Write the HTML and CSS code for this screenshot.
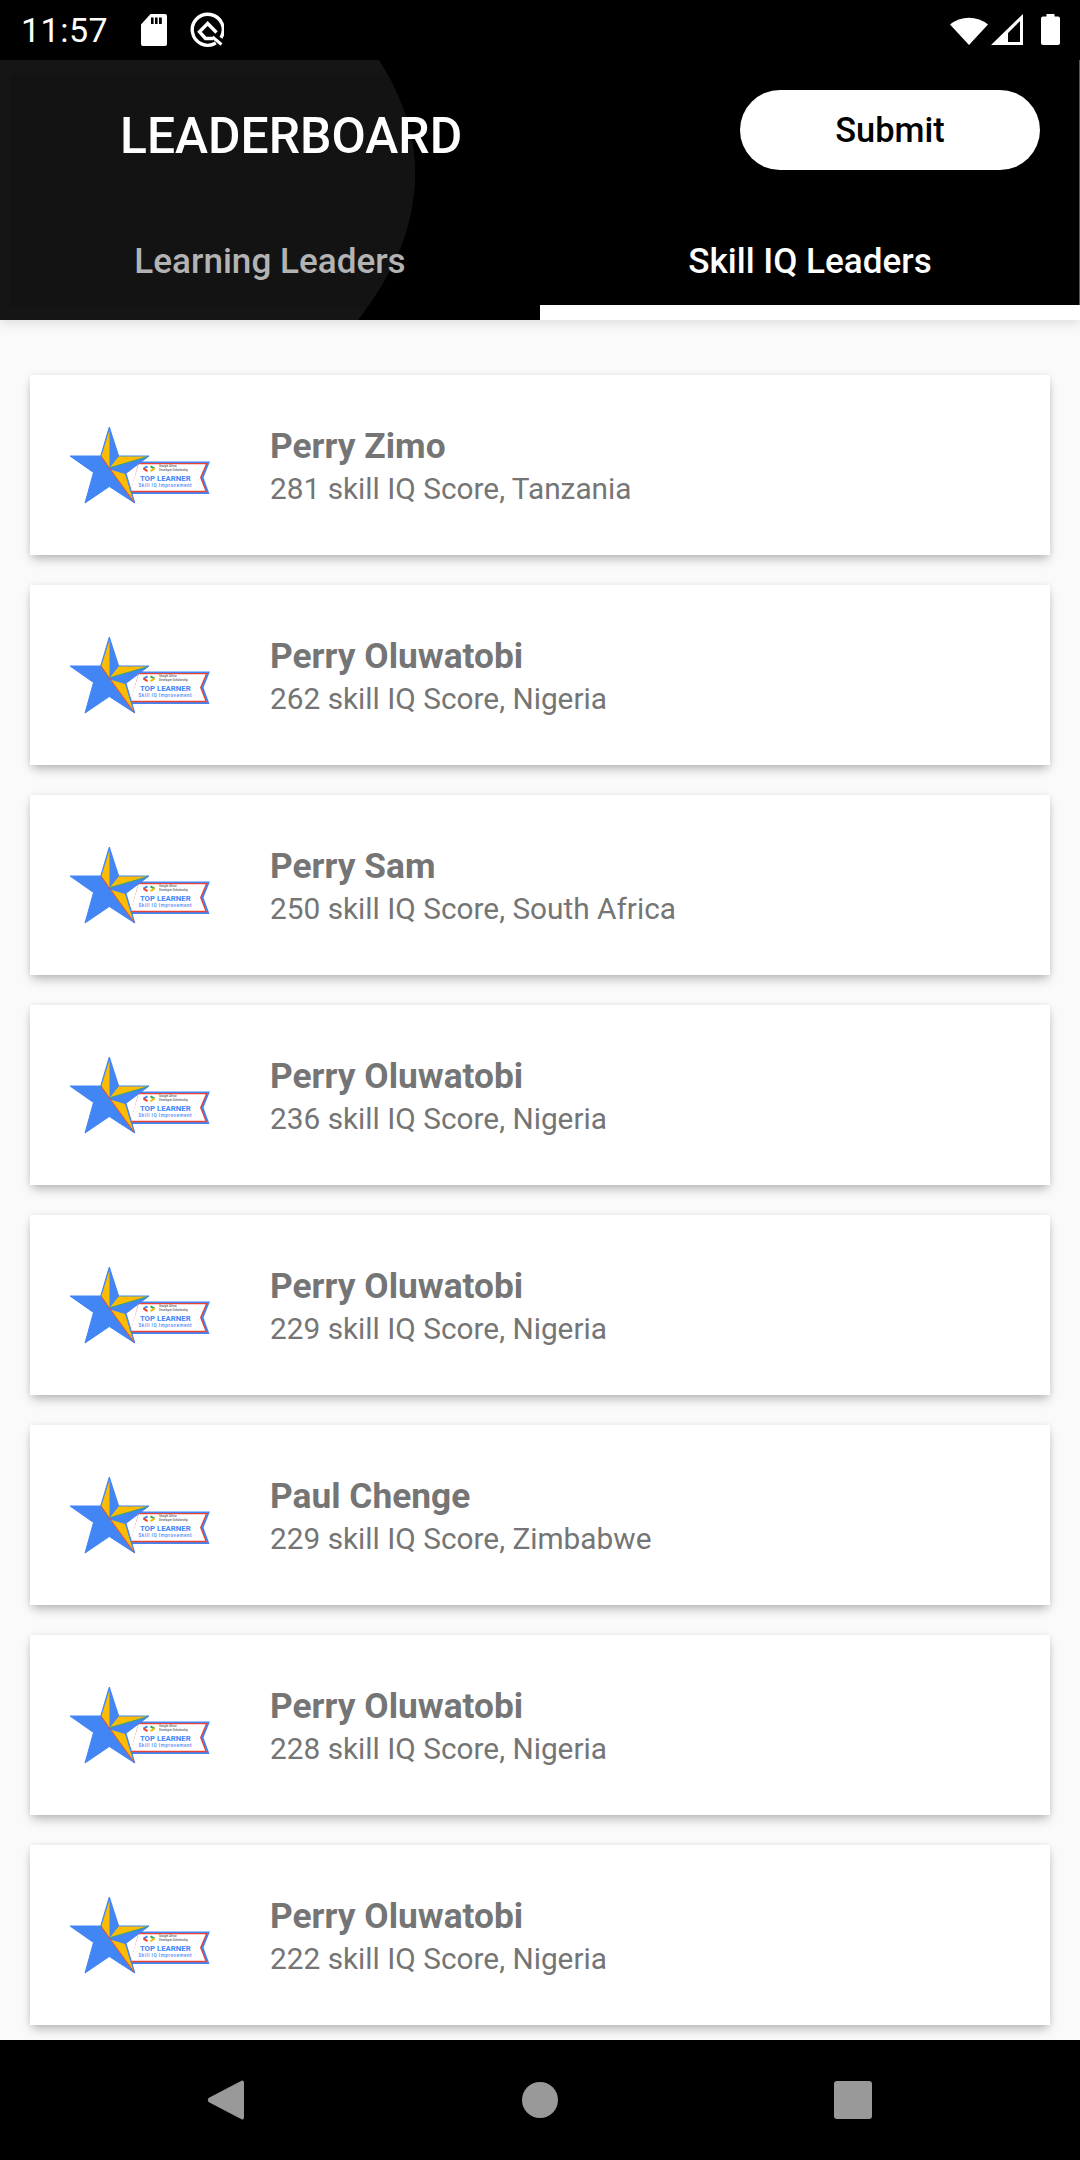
FILE: index.html
```html
<!DOCTYPE html>
<html lang="en">
<head>
<meta charset="utf-8">
<title>Leaderboard</title>
<link rel="stylesheet" href="styles.css">
</head>
<body>
<svg class="defs" width="0" height="0" aria-hidden="true">
  <symbol id="badge-art" viewBox="0 0 160 90">
    <path d="M79.500 41.500H150L143.500 57.500L149.500 74H71.500Z" fill="#4285f4"/>
    <path d="M78.500 43H147.500L141.500 57.500L147 72.300H70.500Z" fill="#ea4335"/>
    <path d="M78.500 44.200H145.700L140 57.500L145.200 70.800H70.500Z" fill="#fff"/>
    <path d="M49.300 7L58.700 36H89L66 53.300L74.800 83L49.300 66.500L25 83L33.500 52.500L10 36H40.700Z" fill="#4285f4" stroke="#4285f4" stroke-width="1" stroke-linejoin="round"/>
    <path d="M49.500 10L41.500 36L49.500 48Z" fill="#fbbc04"/>
    <path d="M49.500 48L58.700 36.500H87L49.500 47.800Z" fill="#fbbc04"/>
    <path d="M49.800 47.600L87 37" stroke="#34a853" stroke-width=".8" fill="none"/>
    <path d="M50 49.500L65 54L73.500 81.500Z" fill="#fbbc04"/>
    <path d="M41 36.500L74.300 82.500" stroke="#ea4335" stroke-width="1" fill="none"/>
    <path d="M87.500 46.300L83.500 48.700" stroke="#4285f4" stroke-width="2" fill="none"/>
    <path d="M83.500 48.700L87.500 51.100" stroke="#ea4335" stroke-width="2" fill="none"/>
    <path d="M90.500 46.300L94.500 48.700" stroke="#34a853" stroke-width="2" fill="none"/>
    <path d="M94.500 48.700L90.500 51.100" stroke="#fbbc04" stroke-width="2" fill="none"/>
  </symbol>
</svg>
<div class="screen">
  <div class="status">
    <span class="time">11:57</span>
    <svg class="ic-sd" viewBox="0 0 26 32" width="26" height="32"><path fill-rule="evenodd" d="M9.500 0H24a2 2 0 0 1 2 2V30a2 2 0 0 1-2 2H2a2 2 0 0 1-2-2V10.500ZM10 3.500v6.500h2.600V3.500ZM14 3.500v6.500h2.600V3.500ZM18 3.500v6.500h2.800V3.500Z" fill="#fff"/></svg>
    <svg class="ic-q" viewBox="0 0 36 36" width="36" height="36"><path d="M27.800 31A15.500 15.500 0 1 1 33 25.800" fill="none" stroke="#fff" stroke-width="3.400"/><path d="M28.500 20.500L19.700 11.500L11.500 19.800L17.500 26.500H25" fill="none" stroke="#fff" stroke-width="3.400"/><path d="M24.500 25L33.500 32.500" stroke="#fff" stroke-width="3"/></svg>
    <span class="status-right">
      <svg viewBox="0 0 38 31" width="38" height="31"><path d="M0 10.500A30 30 0 0 1 38 10.500L19 31Z" fill="#fff"/></svg>
      <svg viewBox="0 0 32 31" width="32" height="31"><path fill-rule="evenodd" d="M32 0V31H0ZM29 7L17 19V28H29Z" fill="#fff"/></svg>
      <svg class="ic-bat" viewBox="0 0 19 31" width="19" height="31"><path d="M5.500 0H13.500V2.500H17a2 2 0 0 1 2 2V29a2 2 0 0 1-2 2H2a2 2 0 0 1-2-2V4.500a2 2 0 0 1 2-2H5.500Z" fill="#fff"/></svg>
    </span>
  </div>
  <header class="header">
    <svg class="arc" viewBox="0 0 420 260" width="420" height="260" aria-hidden="true">
      <clipPath id="arc-clip"><path d="M0 0H379C403 38 415 76 415 112C415 170 392 215 358 260H0Z"/></clipPath>
      <g clip-path="url(#arc-clip)"><rect width="420" height="260" fill="#151515"/><rect x="10" y="14" width="410" height="234" fill="#131313"/></g>
    </svg>
    <div class="top-row">
      <h1 class="title">LEADERBOARD</h1>
      <button class="submit">Submit</button>
    </div>
    <nav class="tabs">
      <div class="tab">Learning Leaders</div>
      <div class="tab active">Skill IQ Leaders</div>
    </nav>
  </header>
  <main class="list">
    <div class="card"><svg class="badge" viewBox="0 0 160 90"><use href="#badge-art" width="160" height="90"/><text class="b-small" x="99" y="47">Google Africa</text><text class="b-small" x="99" y="51">Developer Scholarship</text><text class="b-top" x="105.300" y="61" text-anchor="middle">TOP LEARNER</text><text class="b-skill" x="105.300" y="67" text-anchor="middle">Skill IQ Improvement</text></svg><div class="info"><div class="name">Perry Zimo</div><div class="score">281 skill IQ Score, Tanzania</div></div></div>
    <div class="card"><svg class="badge" viewBox="0 0 160 90"><use href="#badge-art" width="160" height="90"/><text class="b-small" x="99" y="47">Google Africa</text><text class="b-small" x="99" y="51">Developer Scholarship</text><text class="b-top" x="105.300" y="61" text-anchor="middle">TOP LEARNER</text><text class="b-skill" x="105.300" y="67" text-anchor="middle">Skill IQ Improvement</text></svg><div class="info"><div class="name">Perry Oluwatobi</div><div class="score">262 skill IQ Score, Nigeria</div></div></div>
    <div class="card"><svg class="badge" viewBox="0 0 160 90"><use href="#badge-art" width="160" height="90"/><text class="b-small" x="99" y="47">Google Africa</text><text class="b-small" x="99" y="51">Developer Scholarship</text><text class="b-top" x="105.300" y="61" text-anchor="middle">TOP LEARNER</text><text class="b-skill" x="105.300" y="67" text-anchor="middle">Skill IQ Improvement</text></svg><div class="info"><div class="name">Perry Sam</div><div class="score">250 skill IQ Score, South Africa</div></div></div>
    <div class="card"><svg class="badge" viewBox="0 0 160 90"><use href="#badge-art" width="160" height="90"/><text class="b-small" x="99" y="47">Google Africa</text><text class="b-small" x="99" y="51">Developer Scholarship</text><text class="b-top" x="105.300" y="61" text-anchor="middle">TOP LEARNER</text><text class="b-skill" x="105.300" y="67" text-anchor="middle">Skill IQ Improvement</text></svg><div class="info"><div class="name">Perry Oluwatobi</div><div class="score">236 skill IQ Score, Nigeria</div></div></div>
    <div class="card"><svg class="badge" viewBox="0 0 160 90"><use href="#badge-art" width="160" height="90"/><text class="b-small" x="99" y="47">Google Africa</text><text class="b-small" x="99" y="51">Developer Scholarship</text><text class="b-top" x="105.300" y="61" text-anchor="middle">TOP LEARNER</text><text class="b-skill" x="105.300" y="67" text-anchor="middle">Skill IQ Improvement</text></svg><div class="info"><div class="name">Perry Oluwatobi</div><div class="score">229 skill IQ Score, Nigeria</div></div></div>
    <div class="card"><svg class="badge" viewBox="0 0 160 90"><use href="#badge-art" width="160" height="90"/><text class="b-small" x="99" y="47">Google Africa</text><text class="b-small" x="99" y="51">Developer Scholarship</text><text class="b-top" x="105.300" y="61" text-anchor="middle">TOP LEARNER</text><text class="b-skill" x="105.300" y="67" text-anchor="middle">Skill IQ Improvement</text></svg><div class="info"><div class="name">Paul Chenge</div><div class="score">229 skill IQ Score, Zimbabwe</div></div></div>
    <div class="card"><svg class="badge" viewBox="0 0 160 90"><use href="#badge-art" width="160" height="90"/><text class="b-small" x="99" y="47">Google Africa</text><text class="b-small" x="99" y="51">Developer Scholarship</text><text class="b-top" x="105.300" y="61" text-anchor="middle">TOP LEARNER</text><text class="b-skill" x="105.300" y="67" text-anchor="middle">Skill IQ Improvement</text></svg><div class="info"><div class="name">Perry Oluwatobi</div><div class="score">228 skill IQ Score, Nigeria</div></div></div>
    <div class="card"><svg class="badge" viewBox="0 0 160 90"><use href="#badge-art" width="160" height="90"/><text class="b-small" x="99" y="47">Google Africa</text><text class="b-small" x="99" y="51">Developer Scholarship</text><text class="b-top" x="105.300" y="61" text-anchor="middle">TOP LEARNER</text><text class="b-skill" x="105.300" y="67" text-anchor="middle">Skill IQ Improvement</text></svg><div class="info"><div class="name">Perry Oluwatobi</div><div class="score">222 skill IQ Score, Nigeria</div></div></div>
  </main>
  <div class="navbar">
    <svg viewBox="0 0 38 40" width="38" height="40"><path d="M35 .5Q37 0 37 3V37Q37 40 35 39.500L1.500 22Q0 20 1.500 18Z" fill="#999"/></svg>
    <svg viewBox="0 0 36 36" width="36" height="36"><circle cx="18" cy="18" r="18" fill="#999"/></svg>
    <svg viewBox="0 0 38 38" width="38" height="38"><rect width="38" height="38" rx="3" fill="#999"/></svg>
  </div>
</div>
</body>
</html>
```
FILE: styles.css
```css
* { box-sizing: border-box; }
html, body { margin: 0; padding: 0; }
body { width: 1080px; height: 2160px; overflow: hidden; font-family: Roboto, "Liberation Sans", sans-serif; background: #fafafa; }
.defs { position: absolute; }
.screen { width: 1080px; height: 2160px; display: flex; flex-direction: column; overflow: hidden; }

.status { height: 60px; background: #000; color: #fff; display: flex; align-items: center; padding: 0 20px 0 21px; flex: none; }
.time { font-size: 34px; font-weight: 400; letter-spacing: .5px; width: 120px; }
.ic-sd { margin-right: 21px; }
.status-right { margin-left: auto; display: flex; align-items: center; gap: 3px; margin-top: -1px; }
.ic-bat { margin-left: 15px; }

.header { position: relative; height: 260px; background: #000; flex: none; display: flex; flex-direction: column; box-shadow: 0 3px 12px rgba(0,0,0,.12); z-index: 1; }
.header::after { content: ""; position: absolute; right: 0; top: 0; bottom: 15px; width: 1px; background: #555; }
.arc { position: absolute; left: 0; top: 0; }
.top-row { position: relative; display: flex; align-items: center; justify-content: space-between; height: 134px; padding: 0 40px 0 120px; }
.title { margin: 17px 0 0; font-size: 49.800px; font-weight: 500; color: #fff; line-height: 56px; }
.submit { width: 300px; height: 80px; margin-top: 6px; background: #fff; color: #000; border: 0; border-radius: 40px; font-family: Roboto, sans-serif; font-size: 34.400px; font-weight: 500; padding: 0; }
.tabs { position: relative; flex: 1; display: grid; grid-template-columns: 1fr 1fr; }
.tab { display: flex; align-items: center; justify-content: center; padding-top: 22px; font-size: 35.100px; font-weight: 500; color: #b3b3b3; border-bottom: 15px solid transparent; }
.tab.active { color: #fff; border-bottom-color: #fff; }

.list { flex: 1; min-height: 0; padding: 55px 30px 0; display: flex; flex-direction: column; gap: 30px; overflow: hidden; }
.card { flex: none; height: 180px; background: #fff; display: flex; align-items: center; padding-left: 30px; gap: 50px; box-shadow: 0 6px 10px -2px rgba(0,0,0,.26), 0 0 6px rgba(0,0,0,.08); }
.badge { width: 160px; height: 90px; flex: none; }
.info { display: flex; flex-direction: column; padding-top: 4px; }
.name { font-size: 35.300px; font-weight: 700; color: #757575; line-height: 44px; }
.score { font-size: 29.800px; font-weight: 400; color: #757575; line-height: 42px; }

.b-small { font: 500 2.900px Roboto, sans-serif; fill: #5f6368; }
.b-top { font: 700 7.800px Roboto, sans-serif; fill: #4285f4; }
.b-skill { font: 500 4.600px Roboto, sans-serif; fill: #4285f4; letter-spacing: .55px; }

.navbar { height: 120px; background: #000; flex: none; position: relative; z-index: 1; display: grid; grid-template-columns: repeat(3, 38px); justify-content: start; justify-items: center; align-items: center; padding-left: 207px; column-gap: 275.500px; }
```
